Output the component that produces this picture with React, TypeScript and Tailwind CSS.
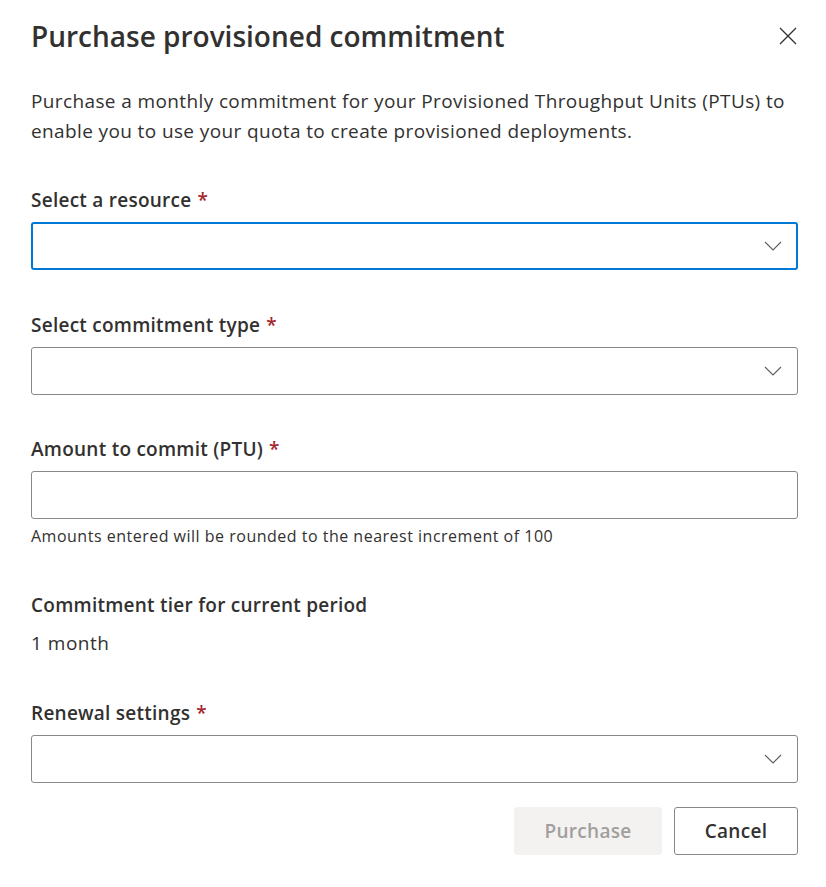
import React from 'react';

const Chevron = () => (
  <svg width="18" height="10" viewBox="0 0 18 10" fill="none" className="text-[#605e5c]">
    <path d="M1 1l8 8 8-8" stroke="currentColor" strokeWidth="1.1" />
  </svg>
);

const Label: React.FC<{ text: string; required?: boolean; className?: string }> = ({ text, required, className }) => (
  <div className={`h-[26px] text-[19px] leading-[26px] tracking-[0.25px] font-semibold text-[#323130] ${className ?? ''}`}>
    {text}
    {required && <span className="ml-[6px] text-[#a4262c]">*</span>}
  </div>
);

const Dropdown: React.FC<{ focused?: boolean }> = ({ focused }) => (
  <div
    className={`mt-[9px] h-[48px] rounded-[3px] bg-white flex items-center justify-end ${
      focused ? 'border-2 border-[#0078d4] pr-[14px]' : 'border border-[#8a8886] pr-[15px]'
    }`}
  >
    <Chevron />
  </div>
);

export default function App() {
  return (
    <div className="w-[826px] h-[887px] bg-white pl-[31px] pr-[28px] pt-[18px] text-[#323130]" style={{ fontFamily: '"Open Sans", "Noto Sans", sans-serif' }}>
      {/* Header */}
      <div className="flex items-center justify-between h-[36px]">
        <h1 className="text-[28px] leading-[36px] font-semibold">Purchase provisioned commitment</h1>
        <button className="mr-[1px] text-[#323130]">
          <svg width="18" height="18" viewBox="0 0 18 18" fill="none">
            <path d="M1 1l16 16M17 1L1 17" stroke="currentColor" strokeWidth="1.3" />
          </svg>
        </button>
      </div>

      <p className="mt-[32px] text-[19px] leading-[30px] tracking-[0.38px]">
        Purchase a monthly commitment for your Provisioned Throughput Units (PTUs) to enable you to use your quota to create provisioned deployments.
      </p>

      <Label text="Select a resource" required className="mt-[41px]" />
      <Dropdown focused />

      <Label text="Select commitment type" required className="mt-[42px]" />
      <Dropdown />

      <Label text="Amount to commit (PTU)" required className="mt-[41px]" />
      <input className="mt-[9px] block w-full h-[48px] rounded-[3px] border border-[#8a8886] bg-white outline-none" />
      <div className="mt-[7px] text-[16px] leading-[20px] tracking-[0.5px]">Amounts entered will be rounded to the nearest increment of 100</div>

      <Label text="Commitment tier for current period" className="mt-[46px]" />
      <div className="mt-[12px] text-[19px] leading-[26px] tracking-[0.5px]">1 month</div>

      <Label text="Renewal settings" required className="mt-[44px]" />
      <Dropdown />

      {/* Footer */}
      <div className="mt-[24px] flex justify-end gap-[12px]">
        <button disabled className="w-[148px] h-[48px] rounded-[3px] bg-[#f3f2f1] text-[19px] tracking-[0.3px] font-semibold text-[#a19f9d]">
          Purchase
        </button>
        <button className="w-[124px] h-[48px] rounded-[3px] border border-[#8a8886] bg-white text-[19px] tracking-[0.3px] font-semibold text-[#323130]">
          Cancel
        </button>
      </div>
    </div>
  );
}
